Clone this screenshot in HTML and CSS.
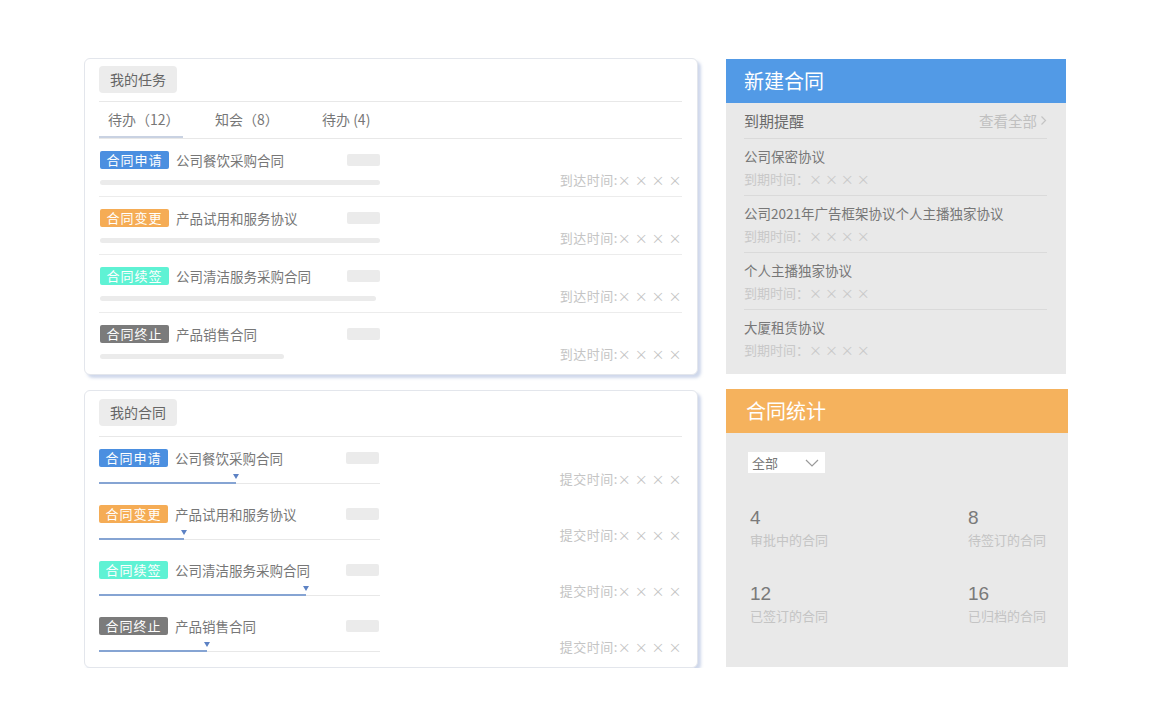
FILE: index.html
```html
<!DOCTYPE html>
<html lang="zh-CN">
<head>
<meta charset="utf-8">
<title>合同工作台</title>
<link rel="stylesheet" href="styles.css">
</head>
<body>
<div class="page">
  <div class="left">
    <section class="card card-task">
      <div class="card-head"><span class="chip">我的任务</span></div>
      <div class="tabs">
        <div class="tab active">待办（12）</div>
        <div class="tab">知会（8）</div>
        <div class="tab">待办 (4)</div>
      </div>
      <div class="task-row">
        <div class="row-main">
          <div class="row-top">
            <div class="row-title"><span class="tag tag-blue">合同申请</span><span class="title">公司餐饮采购合同</span></div>
            <span class="ph"></span>
          </div>
          <div class="bar" style="width:280px"></div>
        </div>
        <div class="row-time">到达时间:× × × ×</div>
      </div>
      <div class="task-row">
        <div class="row-main">
          <div class="row-top">
            <div class="row-title"><span class="tag tag-orange">合同变更</span><span class="title">产品试用和服务协议</span></div>
            <span class="ph"></span>
          </div>
          <div class="bar" style="width:280px"></div>
        </div>
        <div class="row-time">到达时间:× × × ×</div>
      </div>
      <div class="task-row">
        <div class="row-main">
          <div class="row-top">
            <div class="row-title"><span class="tag tag-teal">合同续签</span><span class="title">公司清洁服务采购合同</span></div>
            <span class="ph"></span>
          </div>
          <div class="bar" style="width:276px"></div>
        </div>
        <div class="row-time">到达时间:× × × ×</div>
      </div>
      <div class="task-row">
        <div class="row-main">
          <div class="row-top">
            <div class="row-title"><span class="tag tag-gray">合同终止</span><span class="title">产品销售合同</span></div>
            <span class="ph"></span>
          </div>
          <div class="bar" style="width:184px"></div>
        </div>
        <div class="row-time">到达时间:× × × ×</div>
      </div>
    </section>

    <section class="card card-contract">
      <div class="card-head"><span class="chip">我的合同</span></div>
      <div class="c-row">
        <div class="row-main">
          <div class="row-top">
            <div class="row-title"><span class="tag tag-blue">合同申请</span><span class="title">公司餐饮采购合同</span></div>
            <span class="ph"></span>
          </div>
          <div class="progress"><div class="fill" style="width:137px"></div><div class="rest"></div></div>
        </div>
        <div class="row-time c-time">提交时间:× × × ×</div>
      </div>
      <div class="c-row">
        <div class="row-main">
          <div class="row-top">
            <div class="row-title"><span class="tag tag-orange">合同变更</span><span class="title">产品试用和服务协议</span></div>
            <span class="ph"></span>
          </div>
          <div class="progress"><div class="fill" style="width:85px"></div><div class="rest"></div></div>
        </div>
        <div class="row-time c-time">提交时间:× × × ×</div>
      </div>
      <div class="c-row">
        <div class="row-main">
          <div class="row-top">
            <div class="row-title"><span class="tag tag-teal">合同续签</span><span class="title">公司清洁服务采购合同</span></div>
            <span class="ph"></span>
          </div>
          <div class="progress"><div class="fill" style="width:207px"></div><div class="rest"></div></div>
        </div>
        <div class="row-time c-time">提交时间:× × × ×</div>
      </div>
      <div class="c-row">
        <div class="row-main">
          <div class="row-top">
            <div class="row-title"><span class="tag tag-gray">合同终止</span><span class="title">产品销售合同</span></div>
            <span class="ph"></span>
          </div>
          <div class="progress"><div class="fill" style="width:108px"></div><div class="rest"></div></div>
        </div>
        <div class="row-time c-time">提交时间:× × × ×</div>
      </div>
    </section>
  </div>

  <div class="right">
    <section class="panel panel-new">
      <div class="panel-head head-blue">新建合同</div>
      <div class="panel-body">
        <div class="sub-head">
          <span class="sub-title">到期提醒</span>
          <span class="more">查看全部<svg class="chev" width="7" height="11" viewBox="0 0 7 11"><polyline points="1.5,1.5 5.5,5.5 1.5,9.5" fill="none" stroke="#c4c4c4" stroke-width="1.2"/></svg></span>
        </div>
        <div class="item"><div class="item-title">公司保密协议</div><div class="item-sub">到期时间：× × × ×</div></div>
        <div class="item"><div class="item-title">公司2021年广告框架协议个人主播独家协议</div><div class="item-sub">到期时间：× × × ×</div></div>
        <div class="item"><div class="item-title">个人主播独家协议</div><div class="item-sub">到期时间：× × × ×</div></div>
        <div class="item"><div class="item-title">大厦租赁协议</div><div class="item-sub">到期时间：× × × ×</div></div>
      </div>
    </section>

    <section class="panel panel-stat">
      <div class="panel-head head-orange">合同统计</div>
      <div class="stat-body">
        <div class="select"><span>全部</span><svg width="14" height="8" viewBox="0 0 14 8"><polyline points="1,1 7,7 13,1" fill="none" stroke="#9a9a9a" stroke-width="1.2"/></svg></div>
        <div class="stats">
          <div class="stat"><div class="num">4</div><div class="label">审批中的合同</div></div>
          <div class="stat"><div class="num">8</div><div class="label">待签订的合同</div></div>
          <div class="stat"><div class="num">12</div><div class="label">已签订的合同</div></div>
          <div class="stat"><div class="num">16</div><div class="label">已归档的合同</div></div>
        </div>
      </div>
    </section>
  </div>
</div>
</body>
</html>
```

FILE: styles.css
```css
* { box-sizing: border-box; }
html, body { margin: 0; padding: 0; background: #ffffff; }
body {
  font-family: "Noto Sans CJK SC", "Noto Sans", sans-serif;
  color: #777;
}
.page {
  display: flex;
  gap: 28px;
  padding: 58px 0 0 84px;
}
.left {
  width: 614px;
  display: flex;
  flex-direction: column;
  gap: 15px;
}
.card {
  border: 1px solid #e3e6ec;
  border-radius: 6px;
  background: #fff;
  box-shadow: 3px 3px 3px rgba(160, 178, 215, 0.5);
  padding: 7px 15px 0 14px;
}
.card-task { height: 317px; }
.card-contract { height: 278px; padding-top: 8px; }
.card-head {
  padding-bottom: 8px;
  border-bottom: 1px solid #e8e8e8;
}
.card-contract .card-head { padding-bottom: 10px; }
.chip {
  display: inline-block;
  height: 27px;
  line-height: 27px;
  padding: 0 11px;
  background: #ececec;
  border-radius: 4px;
  font-size: 14px;
  color: #666;
}
.tabs {
  display: flex;
  height: 37px;
  border-bottom: 1px solid #e8e8e8;
}
.tab {
  width: 107px;
  padding-left: 9px;
  line-height: 34px;
  font-size: 14px;
  color: #777;
}
.tab.active {
  width: 84px;
  margin-right: 23px;
  border-bottom: 2px solid #c9d2e2;
}
.task-row {
  display: flex;
  height: 58px;
  padding-top: 12px;
  padding-left: 1px;
  border-bottom: 1px solid #ececec;
}
.task-row:last-child { border-bottom: none; }
.row-main { width: 281px; }
.row-top {
  display: flex;
  justify-content: space-between;
  align-items: center;
  height: 18px;
}
.row-title { display: flex; align-items: center; }
.tag {
  display: inline-block;
  width: 69px;
  height: 18px;
  line-height: 18px;
  text-align: center;
  color: #fff;
  font-size: 13px;
  letter-spacing: 1px;
  border-radius: 2px;
}
.tag-blue { background: #4b8fe0; }
.tag-orange { background: #f5ac55; }
.tag-teal { background: #5ff2d4; }
.tag-gray { background: #7b7b7b; }
.title {
  margin-left: 7px;
  font-size: 13.5px;
  color: #777;
}
.ph {
  width: 33px;
  height: 12px;
  margin-right: 1px;
  background: #ebebeb;
  border-radius: 2px;
}
.bar {
  margin-top: 11px;
  height: 5px;
  background: #ebebeb;
  border-radius: 3px;
}
.row-time {
  flex: 1;
  text-align: right;
  padding-top: 20px;
  line-height: 18px;
  font-size: 13px;
  letter-spacing: 0.5px;
  color: #c4c4c4;
}
.c-row {
  display: flex;
  height: 56px;
  padding-top: 12px;
  padding-left: 0;
}
.progress {
  display: flex;
  align-items: center;
  height: 2px;
  margin-top: 15px;
}
.fill {
  position: relative;
  height: 2px;
  background: #86a4d3;
}
.fill::after {
  content: "";
  position: absolute;
  right: -3px;
  top: -8px;
  border-left: 3px solid transparent;
  border-right: 3px solid transparent;
  border-top: 5px solid #5d82c4;
}
.rest {
  flex: 1;
  height: 1px;
  background: #e8e8e8;
}
.c-time { padding-top: 21px; }

.right {
  width: 342px;
  display: flex;
  flex-direction: column;
  gap: 15px;
  padding-top: 1px;
}
.panel { background: #e9e9e9; }
.panel-new { width: 340px; height: 315px; }
.panel-stat { width: 342px; height: 278px; }
.panel-head {
  height: 44px;
  line-height: 44px;
  padding-left: 18px;
  font-size: 20px;
  color: #fff;
}
.head-blue { background: #529ae6; }
.head-orange { background: #f5b25d; padding-left: 20px; }
.panel-body { padding: 0 19px 0 18px; }
.sub-head {
  display: flex;
  justify-content: space-between;
  align-items: center;
  height: 36px;
  border-bottom: 1px solid #dadada;
}
.sub-title { font-size: 15px; color: #6a6a6a; }
.more {
  display: flex;
  align-items: center;
  gap: 3px;
  font-size: 14.5px;
  color: #c0c0c0;
}
.item {
  padding: 7px 0 6px;
  border-bottom: 1px solid #dadada;
}
.item:last-child { border-bottom: none; }
.item-title { line-height: 20px; font-size: 13.5px; color: #777; }
.item-sub { margin-top: 3px; line-height: 20px; font-size: 13px; color: #c8c8c8; }

.stat-body { padding: 19px 22px 0 22px; }
.select {
  display: flex;
  align-items: center;
  justify-content: space-between;
  width: 77px;
  height: 21px;
  padding: 0 6px 0 4px;
  background: #fff;
  font-size: 13px;
  color: #777;
}
.stats {
  display: grid;
  grid-template-columns: 218px 1fr;
  row-gap: 34px;
  margin-top: 34px;
  padding-left: 2px;
}
.num {
  font-family: "Liberation Sans", "Noto Sans", sans-serif;
  font-size: 19px;
  line-height: 22px;
  color: #7a7a7a;
}
.label {
  margin-top: 2px;
  font-size: 13px;
  line-height: 18px;
  color: #c4c4c4;
}
```
